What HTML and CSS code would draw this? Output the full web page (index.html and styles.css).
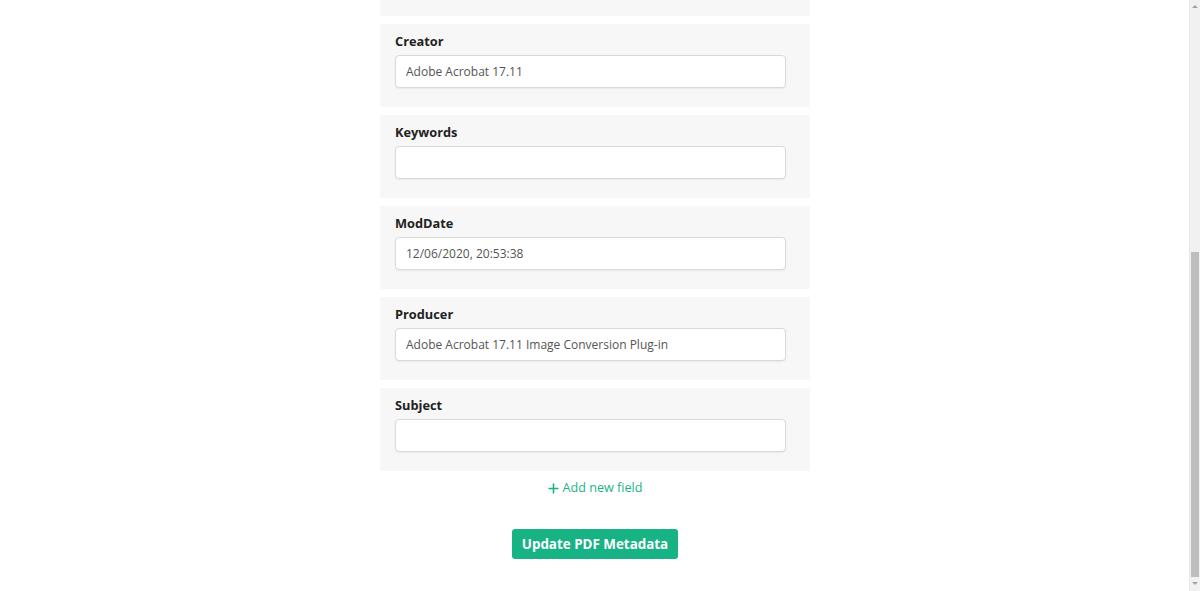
FILE: index.html
```html
<!DOCTYPE html>
<html lang="en">
<head>
<meta charset="utf-8">
<title>Edit PDF Metadata</title>
<link rel="stylesheet" href="styles.css">
</head>
<body>
<div class="window">
  <main class="viewport">
    <div class="content">
      <form class="meta-form">
        <div class="field-list">
          <div class="field-card">
            <input class="field-input" type="text" value="" aria-label="CreationDate">
          </div>
          <div class="field-card">
            <label class="field-label">Creator</label>
            <input class="field-input" type="text" value="Adobe Acrobat 17.11">
          </div>
          <div class="field-card">
            <label class="field-label">Keywords</label>
            <input class="field-input" type="text" value="">
          </div>
          <div class="field-card">
            <label class="field-label">ModDate</label>
            <input class="field-input" type="text" value="12/06/2020, 20:53:38">
          </div>
          <div class="field-card">
            <label class="field-label">Producer</label>
            <input class="field-input" type="text" value="Adobe Acrobat 17.11 Image Conversion Plug-in">
          </div>
          <div class="field-card">
            <label class="field-label">Subject</label>
            <input class="field-input" type="text" value="">
          </div>
        </div>
        <a class="add-field" href="#"><svg class="plus" width="11" height="11" viewBox="0 0 11 11"><path d="M5.5 0.5V10.5M0.5 5.5H10.5" stroke="currentColor" stroke-width="1.6" fill="none"/></svg><span>Add new field</span></a>
        <div class="actions">
          <button class="update-btn" type="button">Update PDF Metadata</button>
        </div>
      </form>
    </div>
  </main>
  <div class="scrollbar">
    <div class="sb-arrow sb-up"></div>
    <div class="sb-track">
      <div class="sb-thumb"></div>
    </div>
    <div class="sb-arrow sb-down"></div>
  </div>
</div>
</body>
</html>
```

FILE: styles.css
```css
* { box-sizing: border-box; }

html, body {
  margin: 0;
  padding: 0;
  background: #ffffff;
}

body {
  font-family: "Open Sans", "Noto Sans", sans-serif;
  color: #222;
}

.window {
  display: flex;
  height: 591px;
  width: 1200px;
  overflow: hidden;
}

.viewport {
  flex: 1;
  display: flex;
  flex-direction: column;
  justify-content: flex-end;
  overflow: hidden;
}

.content {
  width: 431px;
  margin: 0 auto;
  padding-bottom: 32px;
  padding-left: 1px;
}

.meta-form {
  display: flex;
  flex-direction: column;
  align-items: center;
}

.field-list {
  width: 430px;
  display: flex;
  flex-direction: column;
  gap: 8px;
}

.field-card {
  background: #f7f7f7;
  padding: 7px 24px 19px 15px;
  display: flex;
  flex-direction: column;
  gap: 4px;
}

.field-label {
  font-size: 12.8px;
  font-weight: 700;
  line-height: 20px;
  color: #222;
}

.field-input {
  height: 33px;
  width: 100%;
  border: 1px solid #d9d9d9;
  border-radius: 4px;
  background: #fff;
  box-shadow: 0 1px 2px rgba(0,0,0,0.06);
  padding: 0 10px;
  font-family: inherit;
  font-size: 12px;
  color: #555;
  outline: none;
}

.add-field {
  margin-top: 7px;
  line-height: 20px;
  font-size: 12.6px;
  color: #1ab386;
  text-decoration: none;
  display: flex;
  align-items: center;
  gap: 4px;
}

.plus {
  display: block;
}

.actions {
  margin-top: 31px;
}

.update-btn {
  height: 30px;
  padding: 0 10px;
  border: none;
  border-radius: 3px;
  background: #17b385;
  color: #fff;
  font-family: inherit;
  font-size: 13.4px;
  font-weight: 700;
  cursor: pointer;
}

.scrollbar {
  width: 11px;
  background: #f1f1f1;
  display: flex;
  flex-direction: column;
  border-left: 1px solid #e8e8e8;
}

.sb-arrow {
  height: 14px;
  position: relative;
}

.sb-up::after, .sb-down::after {
  content: "";
  position: absolute;
  left: 2px;
  width: 0;
  height: 0;
  border-left: 3px solid transparent;
  border-right: 3px solid transparent;
}

.sb-up::after {
  top: 5px;
  border-bottom: 3px solid #a3a3a3;
}

.sb-down::after {
  top: 5px;
  border-top: 3px solid #a3a3a3;
}

.sb-track {
  flex: 1;
  display: flex;
  flex-direction: column;
  justify-content: flex-end;
  padding: 0 1px 0 1px;
}

.sb-thumb {
  height: 325px;
  background: #bdbdbd;
}
```
